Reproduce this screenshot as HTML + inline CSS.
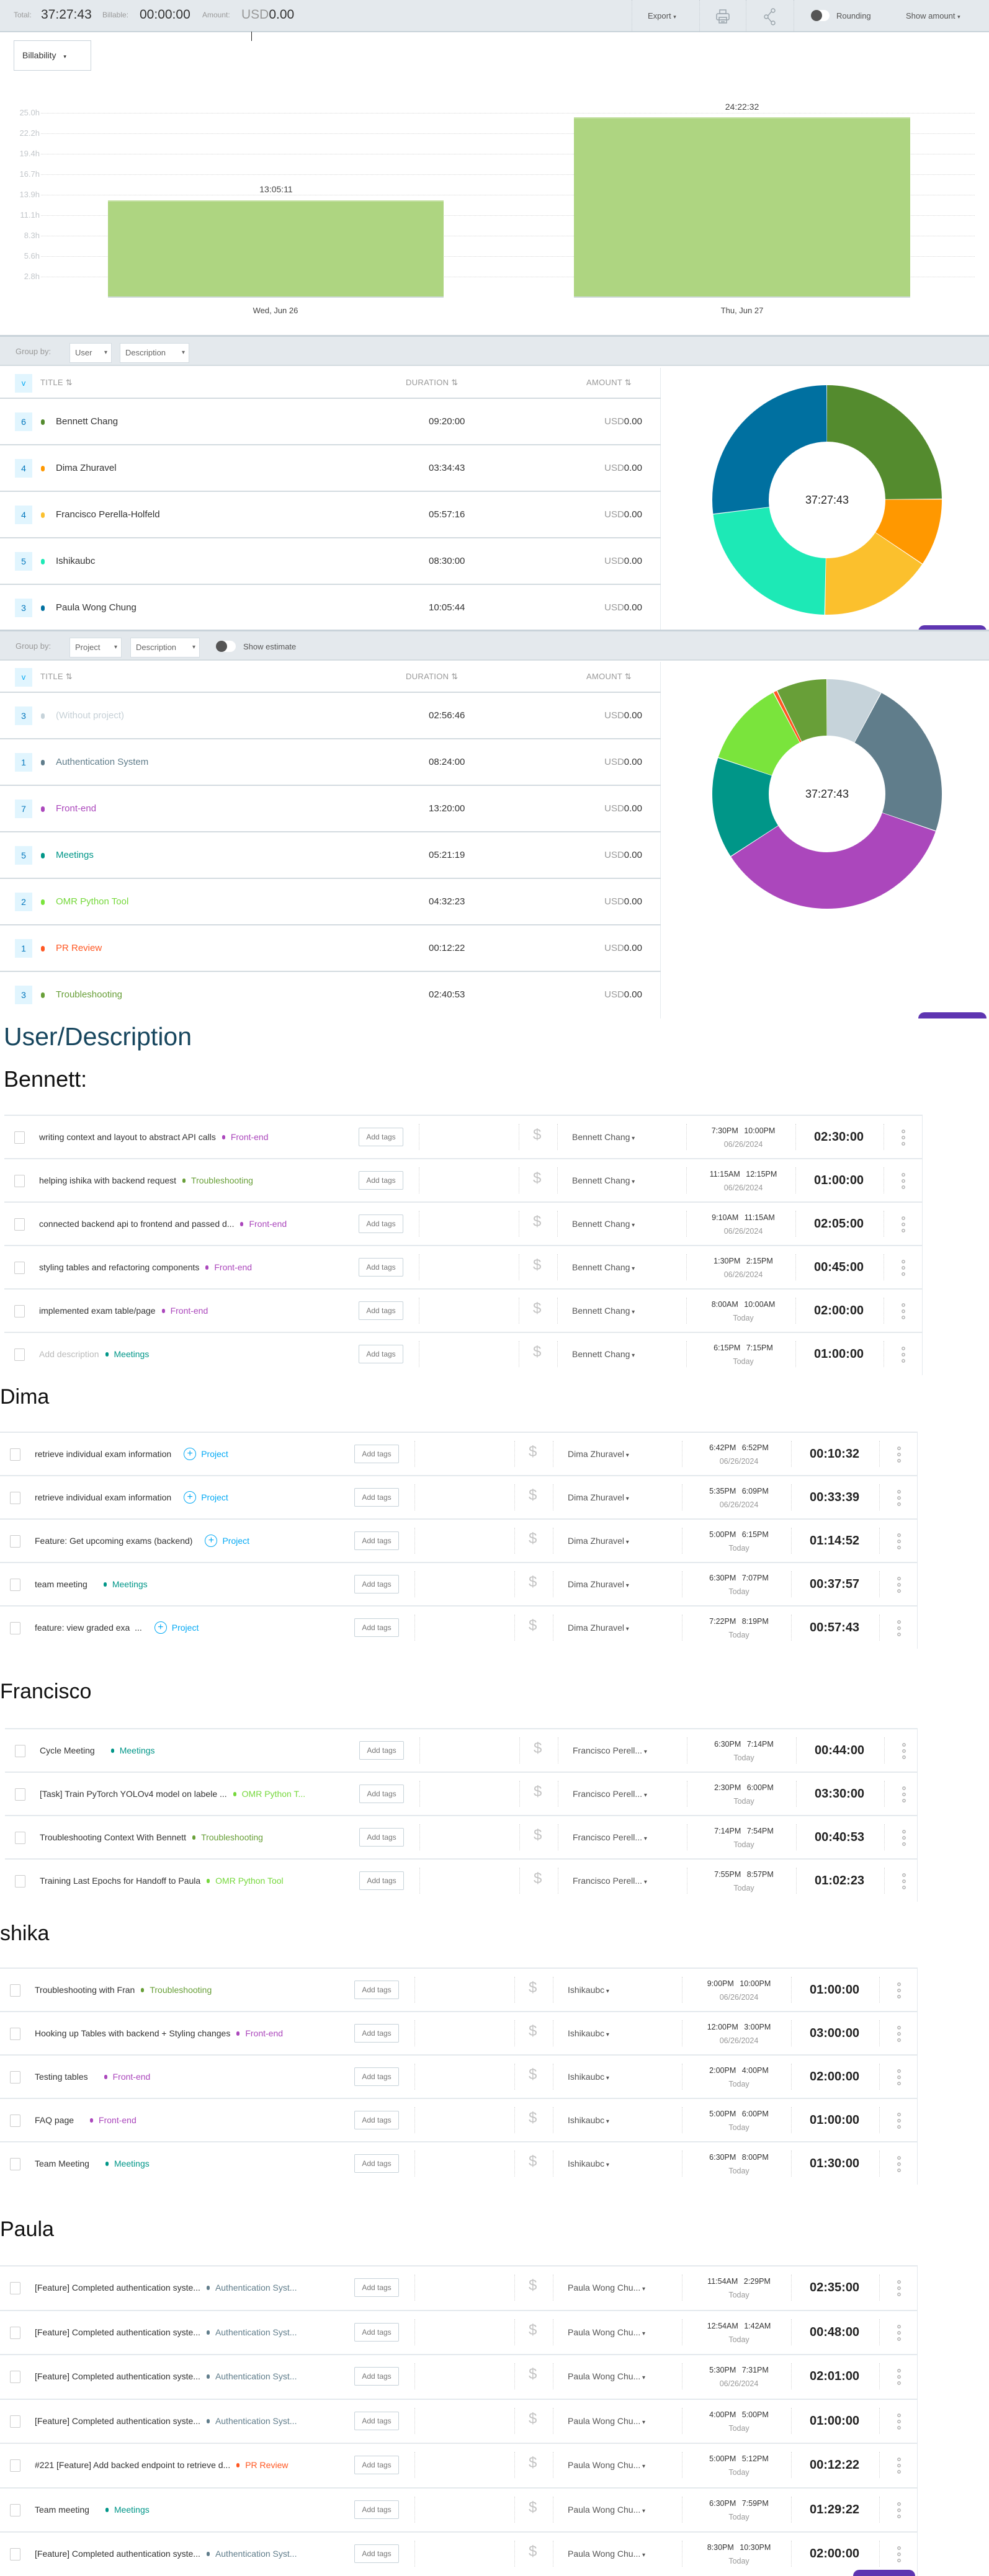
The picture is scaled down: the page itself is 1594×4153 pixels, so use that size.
<!DOCTYPE html>
<html><head><meta charset="utf-8">
<style>
*{box-sizing:border-box;margin:0;padding:0}
body{width:1594px;height:4151px;overflow:hidden;position:relative;background:#fff;font-family:"Liberation Sans",Arial,sans-serif;color:#333}
.a{position:absolute}
.hdr{left:0;top:0;width:1594px;height:52px;background:#e4e9ed;border-bottom:2px solid #c9d3da}
.vs{position:absolute;top:0;height:52px;border-left:1px dotted #c8cfd5}
.gl{position:absolute;left:66px;width:1505px;border-top:1px dotted #d6d6d6}
.yl{position:absolute;left:18px;width:46px;text-align:right;font-size:13px;color:#c3c7cb}
.bar{position:absolute;background:#aed581;border-top:2px solid #c5e1a5}
.gb{left:0;width:1594px;height:50px;background:#e4e9ed;border-top:3px solid #c9d3da;border-bottom:2px solid #d3dbe0}
.btn{position:absolute;top:10px;height:32px;background:#fff;border:1px solid #d4dce2;font-size:13px;color:#666;line-height:30px;padding-left:8px}
.btn::after{content:"▾";position:absolute;right:6px;font-size:10px;color:#666}
.tbl{left:0;width:1065px;border-right:1px solid #e4e9ed}
.th{position:absolute;left:0;width:1065px;height:50px;border-bottom:2px solid #d3dbe0}
.exp{position:absolute;left:24px;top:10px;width:28px;height:30px;background:#e1f5fe;color:#03a9f4;font-size:13px;text-align:center;line-height:30px}
.hc{position:absolute;top:16px;font-size:13px;color:#999;letter-spacing:.3px}
.tr{position:absolute;left:0;width:1065px;height:75px;border-bottom:2px solid #d3dbe0}
.cnt{position:absolute;left:24px;top:22px;width:28px;height:30px;background:#e1f5fe;color:#0277bd;font-size:14px;text-align:center;line-height:30px}
.dot{position:absolute;left:66px;top:33px;width:6px;height:9px;border-radius:3px}
.nm{position:absolute;left:90px;top:28px;font-size:15px;color:#333}
.dur{position:absolute;left:691px;top:28px;font-size:15px;color:#333}
.amt{position:absolute;left:940px;width:95px;text-align:right;top:28px;font-size:15px;color:#333}
.amt span{color:#999}
.ctr{position:absolute;font-size:18px;color:#222;width:120px;text-align:center}
.pb{position:absolute;background:#5e35b1;border-radius:20px 20px 0 0}
.st{position:absolute;left:0;font-size:34px;color:#111}
.sec{position:absolute;border-right:1px solid #e4e9ed}
.r{position:relative;height:70px;border-top:2px solid #e4e9ed;background:#fff}
.r>*{position:absolute}
.cb{left:16px;top:25px;width:17px;height:20px;border:1px solid #ccc;border-radius:2px}
.d{left:56px;top:0;height:68px;display:flex;align-items:center;font-size:14px;color:#333;white-space:nowrap}
.d .ph{color:#bbb}
.tg{margin-left:24px;position:relative;padding-left:0}
.tg::before{content:"";position:absolute;left:-14px;top:5px;width:5px;height:7px;border-radius:3px;background:currentColor}
.pj{margin-left:20px;color:#03a9f4;display:flex;align-items:center}
.pj i{display:inline-block;width:20px;height:20px;border:1px solid #03a9f4;border-radius:50%;text-align:center;line-height:17px;font-style:normal;font-size:16px;margin-right:8px}
.at{left:571px;top:19px;width:72px;height:30px;border:1px solid #c6d2d9;border-radius:2px;font-size:12px;color:#777;text-align:center;line-height:28px;font-weight:normal}
.sp{top:13px;height:42px;border-left:1px dotted #d3d3d3}
.dl{left:852px;top:17px;font-size:24px;color:#c4c4c4}
.u{left:915px;top:26px;font-size:14px;color:#555}
.u::after{content:" ▾";font-size:10px}
.tm{left:1118px;width:146px;text-align:center;top:13px;font-size:12.5px;color:#333;line-height:22px;word-spacing:6px}
.tm em{font-style:normal;color:#999;display:block;word-spacing:0}
.du{left:1305px;top:23px;font-size:20px;font-weight:bold;color:#222}
.dt{left:1446px;top:20px;width:6px;height:30px;background:radial-gradient(circle,#fff 1.3px,#aaa 1.6px,#aaa 2.6px,transparent 3px) 0 0/6px 10px repeat-y}
.fe{color:#ab47bc}.ts{color:#689f38}.mt{color:#009688}.om{color:#76d83c}.pr{color:#ff5722}.au{color:#607d8b}
</style></head><body>

<!-- header -->
<div class="a hdr">
  <div class="a" style="left:22px;top:17px;font-size:12px;color:#999">Total:</div>
  <div class="a" style="left:66px;top:12px;font-size:21px;color:#333">37:27:43</div>
  <div class="a" style="left:165px;top:17px;font-size:12px;color:#999">Billable:</div>
  <div class="a" style="left:225px;top:12px;font-size:21px;color:#333">00:00:00</div>
  <div class="a" style="left:326px;top:17px;font-size:12px;color:#999">Amount:</div>
  <div class="a" style="left:389px;top:12px;font-size:21px;color:#999">USD<span style="color:#333">0.00</span></div>
  <div class="vs" style="left:1018px"></div><div class="vs" style="left:1127px"></div><div class="vs" style="left:1202px"></div><div class="vs" style="left:1279px"></div>
  <div class="a" style="left:1044px;top:18px;font-size:13px;color:#555">Export <span style="font-size:9px">▾</span></div>
  <svg class="a" style="left:1152px;top:14px" width="26" height="26" viewBox="0 0 26 26" fill="none" stroke="#9aa4ab" stroke-width="1.5"><rect x="8" y="2" width="10" height="6"/><rect x="3" y="8" width="20" height="10" rx="2"/><rect x="7" y="14" width="12" height="9"/><path d="M10 18h6M10 21h6"/></svg>
  <svg class="a" style="left:1230px;top:13px" width="22" height="28" viewBox="0 0 22 28" fill="none" stroke="#9aa4ab" stroke-width="1.4"><circle cx="16" cy="4" r="3"/><circle cx="5" cy="14" r="3"/><circle cx="16" cy="24" r="3"/><path d="M13.5 5.5L7.5 12.5M7.5 15.5L13.5 22.5"/></svg>
  <div class="a" style="left:1307px;top:16px;width:30px;height:18px;border-radius:9px;background:#fff"></div>
  <div class="a" style="left:1307px;top:16px;width:18px;height:18px;border-radius:9px;background:#555"></div>
  <div class="a" style="left:1348px;top:18px;font-size:13px;color:#555">Rounding</div>
  <div class="a" style="left:1460px;top:18px;font-size:13px;color:#555">Show amount <span style="font-size:9px">▾</span></div>
</div>
<div class="a" style="left:405px;top:51px;width:1px;height:15px;background:#222"></div>

<!-- chart -->
<div class="a" style="left:22px;top:65px;width:125px;height:49px;border:1px solid #c9d3da;background:#fff;font-size:14px;color:#333;line-height:47px;padding-left:13px">Billability <span style="font-size:9px;margin-left:8px">▾</span></div>
<div class="gl" style="top:182px"></div><div class="yl" style="top:174px">25.0h</div>
<div class="gl" style="top:215px"></div><div class="yl" style="top:207px">22.2h</div>
<div class="gl" style="top:248px"></div><div class="yl" style="top:240px">19.4h</div>
<div class="gl" style="top:281px"></div><div class="yl" style="top:273px">16.7h</div>
<div class="gl" style="top:314px"></div><div class="yl" style="top:306px">13.9h</div>
<div class="gl" style="top:347px"></div><div class="yl" style="top:339px">11.1h</div>
<div class="gl" style="top:380px"></div><div class="yl" style="top:372px">8.3h</div>
<div class="gl" style="top:413px"></div><div class="yl" style="top:405px">5.6h</div>
<div class="gl" style="top:446px"></div><div class="yl" style="top:438px">2.8h</div>
<div class="bar" style="left:174px;top:323px;width:541px;height:156px"></div>
<div class="bar" style="left:925px;top:189px;width:542px;height:290px"></div>
<div class="a" style="left:174px;top:478px;width:541px;height:2px;background:#cfd8dc"></div>
<div class="a" style="left:925px;top:478px;width:542px;height:2px;background:#cfd8dc"></div>
<div class="a" style="left:395px;top:297px;width:100px;text-align:center;font-size:14px;color:#444">13:05:11</div>
<div class="a" style="left:1146px;top:164px;width:100px;text-align:center;font-size:14px;color:#444">24:22:32</div>
<div class="a" style="left:394px;top:493px;width:100px;text-align:center;font-size:13px;color:#444">Wed, Jun 26</div>
<div class="a" style="left:1146px;top:493px;width:100px;text-align:center;font-size:13px;color:#444">Thu, Jun 27</div>

<!-- group 1 -->
<div class="a gb" style="top:540px">
  <div class="a" style="left:25px;top:16px;font-size:13px;color:#999">Group by:</div>
  <div class="btn" style="left:112px;width:68px">User</div>
  <div class="btn" style="left:193px;width:112px">Description</div>
</div>
<div class="a tbl" style="top:593px;height:425px">
  <div class="th"><div class="exp">v</div><div class="hc" style="left:65px">TITLE ⇅</div><div class="hc" style="left:654px">DURATION ⇅</div><div class="hc" style="left:945px">AMOUNT ⇅</div></div>
  <div class="tr" style="top:50px"><div class="cnt">6</div><div class="dot" style="background:#548b2e"></div><div class="nm">Bennett Chang</div><div class="dur">09:20:00</div><div class="amt"><span>USD</span>0.00</div></div>
  <div class="tr" style="top:125px"><div class="cnt">4</div><div class="dot" style="background:#ff9800"></div><div class="nm">Dima Zhuravel</div><div class="dur">03:34:43</div><div class="amt"><span>USD</span>0.00</div></div>
  <div class="tr" style="top:200px"><div class="cnt">4</div><div class="dot" style="background:#fbc02d"></div><div class="nm">Francisco Perella-Holfeld</div><div class="dur">05:57:16</div><div class="amt"><span>USD</span>0.00</div></div>
  <div class="tr" style="top:275px"><div class="cnt">5</div><div class="dot" style="background:#1de9b6"></div><div class="nm">Ishikaubc</div><div class="dur">08:30:00</div><div class="amt"><span>USD</span>0.00</div></div>
  <div class="tr" style="top:350px;border-bottom:none"><div class="cnt">3</div><div class="dot" style="background:#0070a0"></div><div class="nm">Paula Wong Chung</div><div class="dur">10:05:44</div><div class="amt"><span>USD</span>0.00</div></div>
</div>
<svg class="a" style="left:1143px;top:616px" width="380" height="380" viewBox="-190 -190 380 380">
 <g transform="rotate(-90)" fill="none" stroke-width="91">
  <circle r="139.5" stroke="#548b2e" stroke-dasharray="217.4 1000" stroke-dashoffset="0"/>
  <circle r="139.5" stroke="#ff9800" stroke-dasharray="82.7 1000" stroke-dashoffset="-218.4"/>
  <circle r="139.5" stroke="#fbc02d" stroke-dasharray="138.3 1000" stroke-dashoffset="-302.1"/>
  <circle r="139.5" stroke="#1de9b6" stroke-dasharray="197.9 1000" stroke-dashoffset="-441.4"/>
  <circle r="139.5" stroke="#0070a0" stroke-dasharray="235.2 1000" stroke-dashoffset="-640.3"/>
 </g>
</svg>
<div class="ctr" style="left:1273px;top:796px">37:27:43</div>
<div class="pb" style="left:1480px;top:1008px;width:110px;height:10px"></div>

<!-- group 2 -->
<div class="a gb" style="top:1015px">
  <div class="a" style="left:25px;top:16px;font-size:13px;color:#999">Group by:</div>
  <div class="btn" style="left:112px;width:84px">Project</div>
  <div class="btn" style="left:210px;width:112px">Description</div>
  <div class="a" style="left:348px;top:15px;width:32px;height:18px;border-radius:9px;background:#fff"></div>
  <div class="a" style="left:348px;top:15px;width:18px;height:18px;border-radius:9px;background:#555"></div>
  <div class="a" style="left:392px;top:17px;font-size:13px;color:#555">Show estimate</div>
</div>
<div class="a tbl" style="top:1067px;height:575px">
  <div class="th"><div class="exp">v</div><div class="hc" style="left:65px">TITLE ⇅</div><div class="hc" style="left:654px">DURATION ⇅</div><div class="hc" style="left:945px">AMOUNT ⇅</div></div>
  <div class="tr" style="top:50px"><div class="cnt">3</div><div class="dot" style="background:#c6d3da"></div><div class="nm" style="color:#c6d0d6">(Without project)</div><div class="dur">02:56:46</div><div class="amt"><span>USD</span>0.00</div></div>
  <div class="tr" style="top:125px"><div class="cnt">1</div><div class="dot" style="background:#607d8b"></div><div class="nm au">Authentication System</div><div class="dur">08:24:00</div><div class="amt"><span>USD</span>0.00</div></div>
  <div class="tr" style="top:200px"><div class="cnt">7</div><div class="dot" style="background:#ab47bc"></div><div class="nm fe">Front-end</div><div class="dur">13:20:00</div><div class="amt"><span>USD</span>0.00</div></div>
  <div class="tr" style="top:275px"><div class="cnt">5</div><div class="dot" style="background:#009688"></div><div class="nm mt">Meetings</div><div class="dur">05:21:19</div><div class="amt"><span>USD</span>0.00</div></div>
  <div class="tr" style="top:350px"><div class="cnt">2</div><div class="dot" style="background:#7ae43c"></div><div class="nm om">OMR Python Tool</div><div class="dur">04:32:23</div><div class="amt"><span>USD</span>0.00</div></div>
  <div class="tr" style="top:425px"><div class="cnt">1</div><div class="dot" style="background:#ff5722"></div><div class="nm pr">PR Review</div><div class="dur">00:12:22</div><div class="amt"><span>USD</span>0.00</div></div>
  <div class="tr" style="top:500px;border-bottom:none"><div class="cnt">3</div><div class="dot" style="background:#689f38"></div><div class="nm ts">Troubleshooting</div><div class="dur">02:40:53</div><div class="amt"><span>USD</span>0.00</div></div>
</div>
<svg class="a" style="left:1143px;top:1090px" width="380" height="380" viewBox="-190 -190 380 380">
 <g transform="rotate(-90)" fill="none" stroke-width="91">
  <circle r="139.5" stroke="#c6d3da" stroke-dasharray="67.9 1000" stroke-dashoffset="0"/>
  <circle r="139.5" stroke="#607d8b" stroke-dasharray="195.5 1000" stroke-dashoffset="-68.9"/>
  <circle r="139.5" stroke="#ab47bc" stroke-dasharray="310.9 1000" stroke-dashoffset="-265.4"/>
  <circle r="139.5" stroke="#009688" stroke-dasharray="124.3 1000" stroke-dashoffset="-577.3"/>
  <circle r="139.5" stroke="#7ae43c" stroke-dasharray="105.2 1000" stroke-dashoffset="-702.6"/>
  <circle r="139.5" stroke="#ff5722" stroke-dasharray="3.8 1000" stroke-dashoffset="-808.8"/>
  <circle r="139.5" stroke="#689f38" stroke-dasharray="61.8 1000" stroke-dashoffset="-813.6"/>
 </g>
</svg>
<div class="ctr" style="left:1273px;top:1270px">37:27:43</div>
<div class="pb" style="left:1480px;top:1632px;width:110px;height:10px"></div>

<!-- User/Description -->
<div class="a" style="left:6px;top:1648px;font-size:41px;color:#17465e">User/Description</div>
<div class="st" style="left:6px;top:1719px;font-size:36px">Bennett:</div>

<div class="sec" style="left:7px;top:1797px;width:1480px">
 <div class="r"><i class="cb"></i><div class="d">writing context and layout to abstract API calls<span class="tg fe">Front-end</span></div><b class="at">Add tags</b><i class="sp" style="left:668px"></i><i class="sp" style="left:829px"></i><span class="dl">$</span><i class="sp" style="left:891px"></i><span class="u">Bennett Chang</span><i class="sp" style="left:1099px"></i><span class="tm">7:30PM 10:00PM<em>06/26/2024</em></span><i class="sp" style="left:1275px"></i><span class="du">02:30:00</span><i class="sp" style="left:1417px"></i><i class="dt"></i></div>
 <div class="r"><i class="cb"></i><div class="d">helping ishika with backend request<span class="tg ts">Troubleshooting</span></div><b class="at">Add tags</b><i class="sp" style="left:668px"></i><i class="sp" style="left:829px"></i><span class="dl">$</span><i class="sp" style="left:891px"></i><span class="u">Bennett Chang</span><i class="sp" style="left:1099px"></i><span class="tm">11:15AM 12:15PM<em>06/26/2024</em></span><i class="sp" style="left:1275px"></i><span class="du">01:00:00</span><i class="sp" style="left:1417px"></i><i class="dt"></i></div>
 <div class="r"><i class="cb"></i><div class="d">connected backend api to frontend and passed d...<span class="tg fe">Front-end</span></div><b class="at">Add tags</b><i class="sp" style="left:668px"></i><i class="sp" style="left:829px"></i><span class="dl">$</span><i class="sp" style="left:891px"></i><span class="u">Bennett Chang</span><i class="sp" style="left:1099px"></i><span class="tm">9:10AM 11:15AM<em>06/26/2024</em></span><i class="sp" style="left:1275px"></i><span class="du">02:05:00</span><i class="sp" style="left:1417px"></i><i class="dt"></i></div>
 <div class="r"><i class="cb"></i><div class="d">styling tables and refactoring components<span class="tg fe">Front-end</span></div><b class="at">Add tags</b><i class="sp" style="left:668px"></i><i class="sp" style="left:829px"></i><span class="dl">$</span><i class="sp" style="left:891px"></i><span class="u">Bennett Chang</span><i class="sp" style="left:1099px"></i><span class="tm">1:30PM 2:15PM<em>06/26/2024</em></span><i class="sp" style="left:1275px"></i><span class="du">00:45:00</span><i class="sp" style="left:1417px"></i><i class="dt"></i></div>
 <div class="r"><i class="cb"></i><div class="d">implemented exam table/page<span class="tg fe">Front-end</span></div><b class="at">Add tags</b><i class="sp" style="left:668px"></i><i class="sp" style="left:829px"></i><span class="dl">$</span><i class="sp" style="left:891px"></i><span class="u">Bennett Chang</span><i class="sp" style="left:1099px"></i><span class="tm">8:00AM 10:00AM<em>Today</em></span><i class="sp" style="left:1275px"></i><span class="du">02:00:00</span><i class="sp" style="left:1417px"></i><i class="dt"></i></div>
 <div class="r"><i class="cb"></i><div class="d"><span class="ph">Add description</span><span class="tg mt">Meetings</span></div><b class="at">Add tags</b><i class="sp" style="left:668px"></i><i class="sp" style="left:829px"></i><span class="dl">$</span><i class="sp" style="left:891px"></i><span class="u">Bennett Chang</span><i class="sp" style="left:1099px"></i><span class="tm">6:15PM 7:15PM<em>Today</em></span><i class="sp" style="left:1275px"></i><span class="du">01:00:00</span><i class="sp" style="left:1417px"></i><i class="dt"></i></div>
</div>

<div class="st" style="top:2233px">Dima</div>
<div class="sec" style="left:0;top:2308px;width:1479px">
 <div class="r"><i class="cb"></i><div class="d">retrieve individual exam information<span class="pj"><i>+</i>Project</span></div><b class="at">Add tags</b><i class="sp" style="left:668px"></i><i class="sp" style="left:829px"></i><span class="dl">$</span><i class="sp" style="left:891px"></i><span class="u">Dima Zhuravel</span><i class="sp" style="left:1099px"></i><span class="tm">6:42PM 6:52PM<em>06/26/2024</em></span><i class="sp" style="left:1275px"></i><span class="du">00:10:32</span><i class="sp" style="left:1417px"></i><i class="dt"></i></div>
 <div class="r"><i class="cb"></i><div class="d">retrieve individual exam information<span class="pj"><i>+</i>Project</span></div><b class="at">Add tags</b><i class="sp" style="left:668px"></i><i class="sp" style="left:829px"></i><span class="dl">$</span><i class="sp" style="left:891px"></i><span class="u">Dima Zhuravel</span><i class="sp" style="left:1099px"></i><span class="tm">5:35PM 6:09PM<em>06/26/2024</em></span><i class="sp" style="left:1275px"></i><span class="du">00:33:39</span><i class="sp" style="left:1417px"></i><i class="dt"></i></div>
 <div class="r"><i class="cb"></i><div class="d">Feature: Get upcoming exams (backend)<span class="pj"><i>+</i>Project</span></div><b class="at">Add tags</b><i class="sp" style="left:668px"></i><i class="sp" style="left:829px"></i><span class="dl">$</span><i class="sp" style="left:891px"></i><span class="u">Dima Zhuravel</span><i class="sp" style="left:1099px"></i><span class="tm">5:00PM 6:15PM<em>Today</em></span><i class="sp" style="left:1275px"></i><span class="du">01:14:52</span><i class="sp" style="left:1417px"></i><i class="dt"></i></div>
 <div class="r"><i class="cb"></i><div class="d">team meeting<span class="tg mt" style="margin-left:40px">Meetings</span></div><b class="at">Add tags</b><i class="sp" style="left:668px"></i><i class="sp" style="left:829px"></i><span class="dl">$</span><i class="sp" style="left:891px"></i><span class="u">Dima Zhuravel</span><i class="sp" style="left:1099px"></i><span class="tm">6:30PM 7:07PM<em>Today</em></span><i class="sp" style="left:1275px"></i><span class="du">00:37:57</span><i class="sp" style="left:1417px"></i><i class="dt"></i></div>
 <div class="r"><i class="cb"></i><div class="d">feature: view graded exa &nbsp;...<span class="pj"><i>+</i>Project</span></div><b class="at">Add tags</b><i class="sp" style="left:668px"></i><i class="sp" style="left:829px"></i><span class="dl">$</span><i class="sp" style="left:891px"></i><span class="u">Dima Zhuravel</span><i class="sp" style="left:1099px"></i><span class="tm">7:22PM 8:19PM<em>Today</em></span><i class="sp" style="left:1275px"></i><span class="du">00:57:43</span><i class="sp" style="left:1417px"></i><i class="dt"></i></div>
</div>

<div class="st" style="top:2708px">Francisco</div>
<div class="sec" style="left:8px;top:2786px;width:1471px">
 <div class="r"><i class="cb"></i><div class="d">Cycle Meeting<span class="tg mt" style="margin-left:40px">Meetings</span></div><b class="at">Add tags</b><i class="sp" style="left:668px"></i><i class="sp" style="left:829px"></i><span class="dl">$</span><i class="sp" style="left:891px"></i><span class="u">Francisco Perell...</span><i class="sp" style="left:1099px"></i><span class="tm">6:30PM 7:14PM<em>Today</em></span><i class="sp" style="left:1275px"></i><span class="du">00:44:00</span><i class="sp" style="left:1417px"></i><i class="dt"></i></div>
 <div class="r"><i class="cb"></i><div class="d">[Task] Train PyTorch YOLOv4 model on labele ...<span class="tg om">OMR Python T...</span></div><b class="at">Add tags</b><i class="sp" style="left:668px"></i><i class="sp" style="left:829px"></i><span class="dl">$</span><i class="sp" style="left:891px"></i><span class="u">Francisco Perell...</span><i class="sp" style="left:1099px"></i><span class="tm">2:30PM 6:00PM<em>Today</em></span><i class="sp" style="left:1275px"></i><span class="du">03:30:00</span><i class="sp" style="left:1417px"></i><i class="dt"></i></div>
 <div class="r"><i class="cb"></i><div class="d">Troubleshooting Context With Bennett<span class="tg ts">Troubleshooting</span></div><b class="at">Add tags</b><i class="sp" style="left:668px"></i><i class="sp" style="left:829px"></i><span class="dl">$</span><i class="sp" style="left:891px"></i><span class="u">Francisco Perell...</span><i class="sp" style="left:1099px"></i><span class="tm">7:14PM 7:54PM<em>Today</em></span><i class="sp" style="left:1275px"></i><span class="du">00:40:53</span><i class="sp" style="left:1417px"></i><i class="dt"></i></div>
 <div class="r"><i class="cb"></i><div class="d">Training Last Epochs for Handoff to Paula<span class="tg om">OMR Python Tool</span></div><b class="at">Add tags</b><i class="sp" style="left:668px"></i><i class="sp" style="left:829px"></i><span class="dl">$</span><i class="sp" style="left:891px"></i><span class="u">Francisco Perell...</span><i class="sp" style="left:1099px"></i><span class="tm">7:55PM 8:57PM<em>Today</em></span><i class="sp" style="left:1275px"></i><span class="du">01:02:23</span><i class="sp" style="left:1417px"></i><i class="dt"></i></div>
</div>

<div class="st" style="top:3098px">shika</div>
<div class="sec" style="left:0;top:3172px;width:1479px">
 <div class="r"><i class="cb"></i><div class="d">Troubleshooting with Fran<span class="tg ts">Troubleshooting</span></div><b class="at">Add tags</b><i class="sp" style="left:668px"></i><i class="sp" style="left:829px"></i><span class="dl">$</span><i class="sp" style="left:891px"></i><span class="u">Ishikaubc</span><i class="sp" style="left:1099px"></i><span class="tm">9:00PM 10:00PM<em>06/26/2024</em></span><i class="sp" style="left:1275px"></i><span class="du">01:00:00</span><i class="sp" style="left:1417px"></i><i class="dt"></i></div>
 <div class="r"><i class="cb"></i><div class="d">Hooking up Tables with backend + Styling changes<span class="tg fe">Front-end</span></div><b class="at">Add tags</b><i class="sp" style="left:668px"></i><i class="sp" style="left:829px"></i><span class="dl">$</span><i class="sp" style="left:891px"></i><span class="u">Ishikaubc</span><i class="sp" style="left:1099px"></i><span class="tm">12:00PM 3:00PM<em>06/26/2024</em></span><i class="sp" style="left:1275px"></i><span class="du">03:00:00</span><i class="sp" style="left:1417px"></i><i class="dt"></i></div>
 <div class="r"><i class="cb"></i><div class="d">Testing tables<span class="tg fe" style="margin-left:40px">Front-end</span></div><b class="at">Add tags</b><i class="sp" style="left:668px"></i><i class="sp" style="left:829px"></i><span class="dl">$</span><i class="sp" style="left:891px"></i><span class="u">Ishikaubc</span><i class="sp" style="left:1099px"></i><span class="tm">2:00PM 4:00PM<em>Today</em></span><i class="sp" style="left:1275px"></i><span class="du">02:00:00</span><i class="sp" style="left:1417px"></i><i class="dt"></i></div>
 <div class="r"><i class="cb"></i><div class="d">FAQ page<span class="tg fe" style="margin-left:40px">Front-end</span></div><b class="at">Add tags</b><i class="sp" style="left:668px"></i><i class="sp" style="left:829px"></i><span class="dl">$</span><i class="sp" style="left:891px"></i><span class="u">Ishikaubc</span><i class="sp" style="left:1099px"></i><span class="tm">5:00PM 6:00PM<em>Today</em></span><i class="sp" style="left:1275px"></i><span class="du">01:00:00</span><i class="sp" style="left:1417px"></i><i class="dt"></i></div>
 <div class="r"><i class="cb"></i><div class="d">Team Meeting<span class="tg mt" style="margin-left:40px">Meetings</span></div><b class="at">Add tags</b><i class="sp" style="left:668px"></i><i class="sp" style="left:829px"></i><span class="dl">$</span><i class="sp" style="left:891px"></i><span class="u">Ishikaubc</span><i class="sp" style="left:1099px"></i><span class="tm">6:30PM 8:00PM<em>Today</em></span><i class="sp" style="left:1275px"></i><span class="du">01:30:00</span><i class="sp" style="left:1417px"></i><i class="dt"></i></div>
</div>

<div class="st" style="top:3575px">Paula</div>
<div class="sec" style="left:0;top:3652px;width:1479px">
 <div class="r" style="height:71.5px"><i class="cb"></i><div class="d">[Feature] Completed authentication syste...<span class="tg au">Authentication Syst...</span></div><b class="at">Add tags</b><i class="sp" style="left:668px"></i><i class="sp" style="left:829px"></i><span class="dl">$</span><i class="sp" style="left:891px"></i><span class="u">Paula Wong Chu...</span><i class="sp" style="left:1099px"></i><span class="tm">11:54AM 2:29PM<em>Today</em></span><i class="sp" style="left:1275px"></i><span class="du">02:35:00</span><i class="sp" style="left:1417px"></i><i class="dt"></i></div>
 <div class="r" style="height:71.5px"><i class="cb"></i><div class="d">[Feature] Completed authentication syste...<span class="tg au">Authentication Syst...</span></div><b class="at">Add tags</b><i class="sp" style="left:668px"></i><i class="sp" style="left:829px"></i><span class="dl">$</span><i class="sp" style="left:891px"></i><span class="u">Paula Wong Chu...</span><i class="sp" style="left:1099px"></i><span class="tm">12:54AM 1:42AM<em>Today</em></span><i class="sp" style="left:1275px"></i><span class="du">00:48:00</span><i class="sp" style="left:1417px"></i><i class="dt"></i></div>
 <div class="r" style="height:71.5px"><i class="cb"></i><div class="d">[Feature] Completed authentication syste...<span class="tg au">Authentication Syst...</span></div><b class="at">Add tags</b><i class="sp" style="left:668px"></i><i class="sp" style="left:829px"></i><span class="dl">$</span><i class="sp" style="left:891px"></i><span class="u">Paula Wong Chu...</span><i class="sp" style="left:1099px"></i><span class="tm">5:30PM 7:31PM<em>06/26/2024</em></span><i class="sp" style="left:1275px"></i><span class="du">02:01:00</span><i class="sp" style="left:1417px"></i><i class="dt"></i></div>
 <div class="r" style="height:71.5px"><i class="cb"></i><div class="d">[Feature] Completed authentication syste...<span class="tg au">Authentication Syst...</span></div><b class="at">Add tags</b><i class="sp" style="left:668px"></i><i class="sp" style="left:829px"></i><span class="dl">$</span><i class="sp" style="left:891px"></i><span class="u">Paula Wong Chu...</span><i class="sp" style="left:1099px"></i><span class="tm">4:00PM 5:00PM<em>Today</em></span><i class="sp" style="left:1275px"></i><span class="du">01:00:00</span><i class="sp" style="left:1417px"></i><i class="dt"></i></div>
 <div class="r" style="height:71.5px"><i class="cb"></i><div class="d">#221 [Feature] Add backed endpoint to retrieve d...<span class="tg pr">PR Review</span></div><b class="at">Add tags</b><i class="sp" style="left:668px"></i><i class="sp" style="left:829px"></i><span class="dl">$</span><i class="sp" style="left:891px"></i><span class="u">Paula Wong Chu...</span><i class="sp" style="left:1099px"></i><span class="tm">5:00PM 5:12PM<em>Today</em></span><i class="sp" style="left:1275px"></i><span class="du">00:12:22</span><i class="sp" style="left:1417px"></i><i class="dt"></i></div>
 <div class="r" style="height:71.5px"><i class="cb"></i><div class="d">Team meeting<span class="tg mt" style="margin-left:40px">Meetings</span></div><b class="at">Add tags</b><i class="sp" style="left:668px"></i><i class="sp" style="left:829px"></i><span class="dl">$</span><i class="sp" style="left:891px"></i><span class="u">Paula Wong Chu...</span><i class="sp" style="left:1099px"></i><span class="tm">6:30PM 7:59PM<em>Today</em></span><i class="sp" style="left:1275px"></i><span class="du">01:29:22</span><i class="sp" style="left:1417px"></i><i class="dt"></i></div>
 <div class="r" style="height:71.5px"><i class="cb"></i><div class="d">[Feature] Completed authentication syste...<span class="tg au">Authentication Syst...</span></div><b class="at">Add tags</b><i class="sp" style="left:668px"></i><i class="sp" style="left:829px"></i><span class="dl">$</span><i class="sp" style="left:891px"></i><span class="u">Paula Wong Chu...</span><i class="sp" style="left:1099px"></i><span class="tm">8:30PM 10:30PM<em>Today</em></span><i class="sp" style="left:1275px"></i><span class="du">02:00:00</span><i class="sp" style="left:1417px"></i><i class="dt"></i></div>
</div>
<div class="pb" style="left:1375px;top:4143px;width:100px;height:10px"></div>
</body></html>
